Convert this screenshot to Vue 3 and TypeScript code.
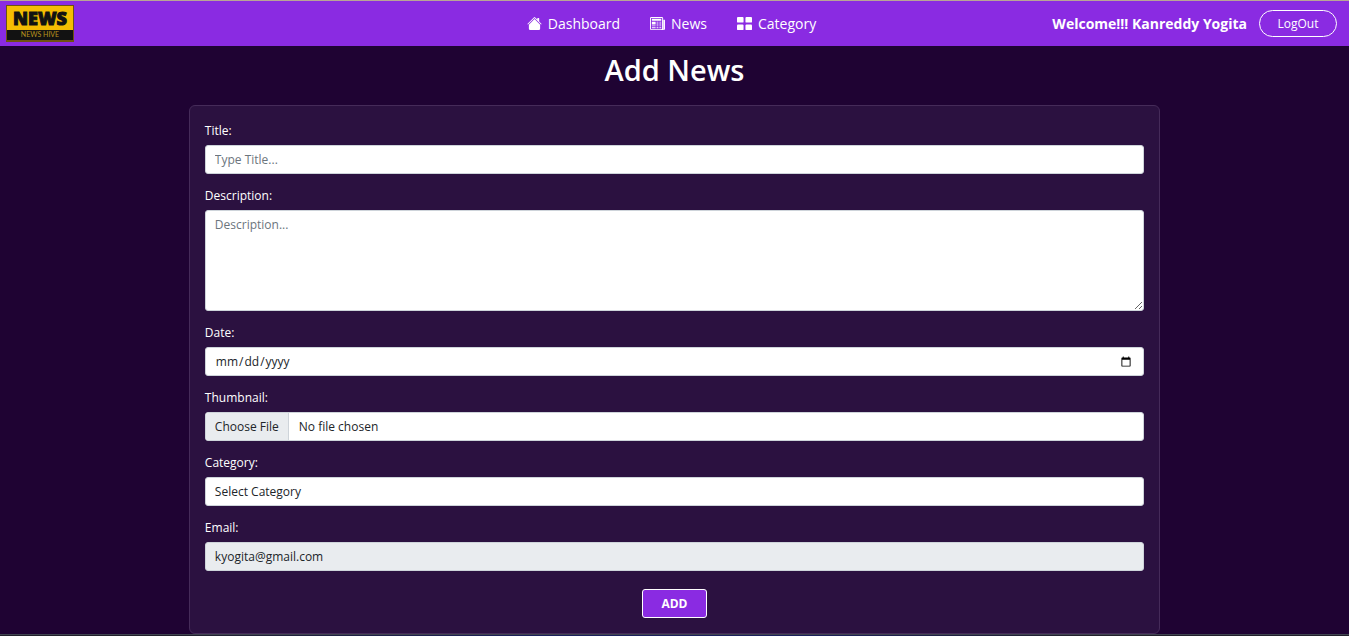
<script setup lang="ts">
import { ref } from 'vue'

const title = ref('')
const description = ref('')
const date = ref('')
const category = ref('')
const categories: string[] = ['Sports', 'Politics', 'Technology']
const email = 'kyogita@gmail.com'
</script>

<template>
  <div class="page">
    <header class="bar">
      <a class="brand" href="#" aria-label="News Hive">
        <svg class="logo" viewBox="0 0 68 37" role="img" aria-label="News Hive">
          <rect width="68" height="37" fill="#6d5310" />
          <rect x="1" y="1" width="66" height="24" fill="#f5bd02" />
          <rect x="1" y="25" width="66" height="10" fill="#121212" />
          <text class="logo-main" x="34" y="20" text-anchor="middle">NEWS</text>
          <text class="logo-sub" x="34" y="32" text-anchor="middle">NEWS HIVE</text>
        </svg>
      </a>
      <nav class="menu">
        <a href="#">
          <svg viewBox="0 0 16 16" fill="currentColor" aria-hidden="true">
            <path d="M8.707 1.5a1 1 0 0 0-1.414 0L.646 8.146a.5.5 0 0 0 .708.708L8 2.207l6.646 6.647a.5.5 0 0 0 .708-.708L13 5.793V2.5a.5.5 0 0 0-.5-.5h-1a.5.5 0 0 0-.5.5v1.293z" />
            <path d="m8 3.293 6 6V13.5a1.5 1.5 0 0 1-1.5 1.5h-9A1.5 1.5 0 0 1 2 13.5V9.293z" />
          </svg>
          Dashboard
        </a>
        <a href="#">
          <svg viewBox="0 0 16 16" fill="currentColor" aria-hidden="true">
            <path d="M0 2.5A1.5 1.5 0 0 1 1.5 1h11A1.5 1.5 0 0 1 14 2.5v10.528c0 .3-.05.654-.238.972h.738a.5.5 0 0 0 .5-.5v-9a.5.5 0 0 1 1 0v9a1.5 1.5 0 0 1-1.5 1.5H1.497A1.497 1.497 0 0 1 0 13.5zM12 14c.37 0 .654-.211.853-.441.092-.106.147-.279.147-.531V2.5a.5.5 0 0 0-.5-.5h-11a.5.5 0 0 0-.5.5v11c0 .278.223.5.497.5z" />
            <path d="M2 3h10v2H2zm0 3h4v3H2zm0 4h4v1H2zm0 2h4v1H2zm5-6h2v1H7zm3 0h2v1h-2zM7 8h2v1H7zm3 0h2v1h-2zm-3 2h2v1H7zm3 0h2v1h-2zm-3 2h2v1H7zm3 0h2v1h-2z" />
            <path d="M13 4h3v10h-3z" opacity=".7" />
          </svg>
          News
        </a>
        <a href="#">
          <svg viewBox="0 0 16 16" fill="currentColor" aria-hidden="true">
            <rect x="0" y="1" width="7" height="6" rx="1" />
            <rect x="9" y="1" width="7" height="6" rx="1" />
            <rect x="0" y="9" width="7" height="6" rx="1" />
            <rect x="9" y="9" width="7" height="6" rx="1" />
          </svg>
          Category
        </a>
      </nav>
      <div class="account">
        <span class="welcome">Welcome!!! Kanreddy Yogita</span>
        <button class="logout" type="button">LogOut</button>
      </div>
    </header>

    <main>
      <h1>Add News</h1>
      <form class="card" @submit.prevent>
        <div class="field">
          <label for="title">Title:</label>
          <input id="title" v-model="title" class="control" type="text" placeholder="Type Title..." />
        </div>
        <div class="field">
          <label for="description">Description:</label>
          <textarea id="description" v-model="description" class="control area" placeholder="Description..."></textarea>
        </div>
        <div class="field">
          <label for="date">Date:</label>
          <input id="date" v-model="date" class="control" type="date" />
        </div>
        <div class="field">
          <label for="thumbnail">Thumbnail:</label>
          <input id="thumbnail" class="control file" type="file" />
        </div>
        <div class="field">
          <label for="category">Category:</label>
          <select id="category" v-model="category" class="control">
            <option value="">Select Category</option>
            <option v-for="c in categories" :key="c" :value="c">{{ c }}</option>
          </select>
        </div>
        <div class="field">
          <label for="email">Email:</label>
          <input id="email" class="control readonly" type="email" :value="email" readonly />
        </div>
        <button class="add" type="submit">ADD</button>
      </form>
    </main>
    <footer class="edge"></footer>
  </div>
</template>

<style>
body {
  background: #1f0333;
}
</style>

<style scoped>
.page {
  min-height: 100vh;
  display: flex;
  flex-direction: column;
  color: #fff;
  font-family: "Segoe UI", "Open Sans", "Noto Sans", sans-serif;
  font-size: 12px;
}

.page *,
.page {
  box-sizing: border-box;
}

.bar {
  display: grid;
  grid-template-columns: 1fr auto 1fr;
  align-items: center;
  height: 46px;
  padding: 0 12px 0 6px;
  border-top: 1px solid #b9a596;
  background: #8a2be2;
}

.brand {
  display: flex;
}

.logo {
  width: 68px;
  height: 37px;
}

.logo-main {
  font-family: "Open Sans", sans-serif;
  font-size: 18px;
  font-weight: 800;
  fill: #121212;
  stroke: #121212;
  stroke-width: 1px;
}

.logo-sub {
  font-family: Lato, sans-serif;
  font-size: 7px;
  fill: #b8921c;
}

.menu {
  display: flex;
  gap: 30px;
}

.menu a {
  display: flex;
  align-items: center;
  gap: 6px;
  color: #fff;
  font-size: 14px;
  line-height: 24px;
  text-decoration: none;
}

.menu svg {
  width: 15px;
  height: 15px;
}

.account {
  display: flex;
  justify-content: flex-end;
  align-items: center;
  gap: 12px;
}

.welcome {
  font-size: 14px;
  font-weight: 700;
}

.logout {
  width: 78px;
  height: 27px;
  padding: 0;
  border: 1px solid #fff;
  border-radius: 14px;
  background: transparent;
  color: #fff;
  font: inherit;
}

main {
  flex: 1;
  display: flex;
  flex-direction: column;
  align-items: center;
}

h1 {
  margin: 6px 0 17px;
  font-size: 29px;
  font-weight: 600;
  line-height: 36px;
}

.card {
  flex: 1;
  display: flex;
  flex-direction: column;
  gap: 13px;
  width: 72%;
  padding: 16px 15px 15px;
  border: 1px solid #452b59;
  border-radius: 6px;
  background: #2b1140;
}

.field {
  display: flex;
  flex-direction: column;
  gap: 5px;
}

label {
  font-weight: 500;
  line-height: 18px;
}

.control {
  width: 100%;
  height: 29px;
  padding: 0 9px;
  border: 1px solid #ced4da;
  border-radius: 3px;
  background: #fff;
  color: #212529;
  font: inherit;
  line-height: 18px;
  appearance: none;
}

.control::placeholder {
  color: #6c757d;
  opacity: 1;
}

.control::-webkit-datetime-edit-fields-wrapper {
  padding: 0;
}

.area {
  height: 101px;
  padding: 5px 9px;
  resize: vertical;
}

.file {
  padding: 0;
  line-height: 27px;
}

.file::file-selector-button {
  height: 27px;
  margin: 0 10px 0 0;
  padding: 0 9px;
  border: 0;
  border-right: 1px solid #ced4da;
  background: #e9ecef;
  color: #212529;
  font: inherit;
}

.readonly {
  background: #e9ecef;
}

.add {
  align-self: center;
  width: 65px;
  height: 29px;
  margin-top: 5px;
  padding: 0;
  border: 1px solid #fff;
  border-radius: 3px;
  background: #8a2be2;
  color: #fff;
  font: inherit;
  font-weight: 700;
}

.edge {
  height: 2px;
  border-top: 1px solid #404450;
  background: linear-gradient(90deg, #22202c 12%, #1a1f5c 40%, #1a1f5c 60%, #22202c 80%);
}
</style>
